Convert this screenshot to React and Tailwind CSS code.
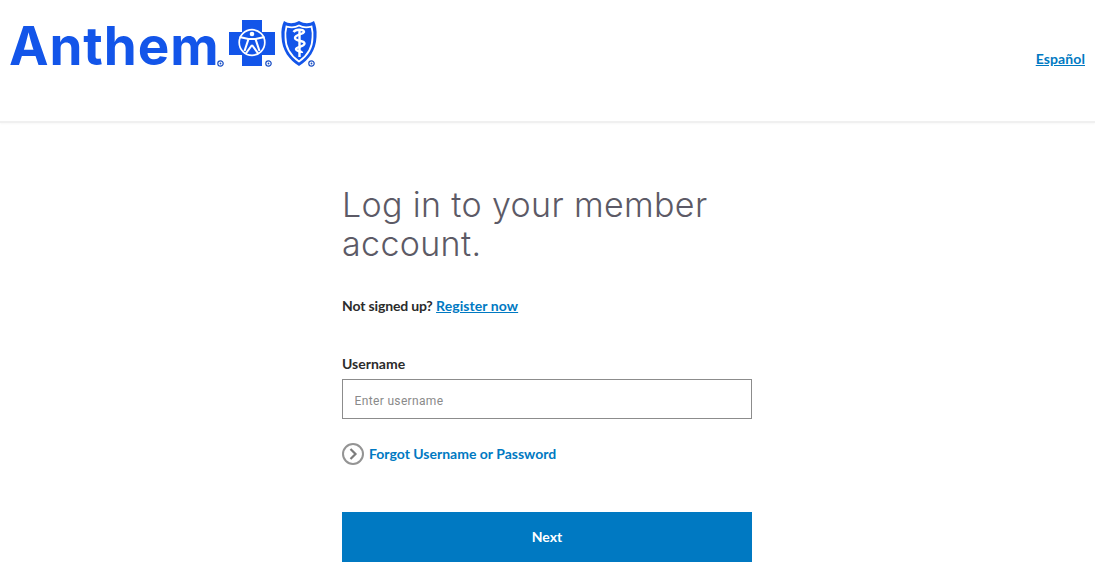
import React from 'react';

const CrossLogo = () => (
  <svg width="46" height="46" viewBox="0 0 46 46" className="block">
    <path d="M13 0h20v12h13v23H33v11H13V35H0V12h13z" fill="#1355e9" />
    <circle cx="23" cy="22.500" r="12.800" fill="none" stroke="#fff" strokeWidth="1.700" />
    <path d="M10.500 17l9 2h7l9-2M19.500 19l-4 12M26.500 19l4 12M23 25l-6.500 9M23 25l6.500 9" fill="none" stroke="#fff" strokeWidth="2.100" />
    <circle cx="23" cy="14" r="2.300" fill="#fff" />
  </svg>
);

const ShieldLogo = () => (
  <svg width="36" height="46" viewBox="0 0 36 46" className="block">
    <path d="M3 1c5 3 9 3 15 0 6 3 10 3 15 0 2 4 3 9 2.500 16C35 30 28 40 18 46 8 40 1 30 .5 17 0 10 1 5 3 1z" fill="#1355e9" />
    <path d="M5.500 6.500c5 1.500 9 1 12.500-1 3.500 2 7.500 2.500 12.500 1 1 4 1.500 7 1 11C31.500 28 26 36 18 41.500 10 36 4.500 28 4.500 17.500c-.5-4 0-7 1-11z" fill="none" stroke="#fff" strokeWidth="1.800" />
    <path d="M18.500 9v28" stroke="#fff" strokeWidth="2.400" />
    <path d="M12.500 12c2-3 9-3 10.500-.5 1 2.500-9 3-9 6.500s9.500 2 9.500 5.500-8.500 3-8.500 5.500 6 2 6 4" fill="none" stroke="#fff" strokeWidth="2.400" />
  </svg>
);

const Mark = ({ className }) => (
  <svg width="7" height="7" viewBox="0 0 7 7" className={className}>
    <circle cx="3.500" cy="3.500" r="2.700" fill="none" stroke="#1a4fc4" strokeWidth="1.200" />
    <circle cx="3.500" cy="3.500" r="0.900" fill="#1a4fc4" />
  </svg>
);

const App = () => {
  return (
    <div className="h-[573px] overflow-hidden bg-white font-['Lato',sans-serif] text-[#2b2b2b]">
      {/* Header */}
      <header className="h-[123px] flex justify-between border-b-2 border-[#f0f0f0] shadow-[0_1px_2px_rgba(0,0,0,0.03)] pl-[9px] pr-[10px]">
        <div className="flex items-start pt-[20px]">
          <span className="inline-block w-[207px] font-['Inter',sans-serif] font-bold text-[53px] leading-[52px] tracking-[0.9px] text-[#1355e9]">Anthem</span>
          <Mark className="mt-[40px] ml-[1px]" />
          <div className="ml-[5px] relative">
            <CrossLogo />
            <Mark className="absolute left-[36px] top-[40px]" />
          </div>
          <div className="ml-[6px] relative">
            <ShieldLogo />
            <Mark className="absolute left-[27px] top-[40px]" />
          </div>
        </div>
        <a href="#" className="mt-[50px] text-sm leading-[17px] tracking-[0.1px] font-bold text-[#0079c2] underline">Español</a>
      </header>

      {/* Login form */}
      <main className="w-[410px] ml-[342px] pt-[62px]">
        <h1 className="font-['Inter',sans-serif] font-light text-[34px] leading-[39px] tracking-[0.35px] text-[#5c5a66]">
          Log in to your member account.
        </h1>
        <p className="mt-[33px] text-sm leading-[20px] font-bold">
          <span className="tracking-[-0.15px]">Not signed up?</span> <a href="#" className="text-[#0079c2] underline tracking-[0.08px]">Register now</a>
        </p>
        <label htmlFor="username" className="block mt-[38px] text-sm leading-[20px] font-bold">Username</label>
        <input
          id="username"
          type="text"
          placeholder="Enter username"
          className="block mt-[5px] w-full h-[40px] border border-[#8c8c8c] pl-[11.500px] pt-[3px] text-[12px] tracking-[0.35px] font-['Roboto',sans-serif] outline-none placeholder:text-[#8a8a8a]"
        />
        <a href="#" className="mt-[24px] flex items-center gap-[5px] text-sm font-bold text-[#0079c2]">
          <svg width="22" height="22" viewBox="0 0 22 22">
            <circle cx="11" cy="11" r="10" fill="none" stroke="#949494" strokeWidth="2" />
            <path d="M8.500 6l5 5-5 5" fill="none" stroke="#7d7d7d" strokeWidth="2.200" />
          </svg>
          Forgot Username or Password
        </a>
        <button className="mt-[47px] w-full h-[50px] bg-[#0079c2] text-white text-sm font-bold">Next</button>
      </main>
    </div>
  );
};

export default App;
